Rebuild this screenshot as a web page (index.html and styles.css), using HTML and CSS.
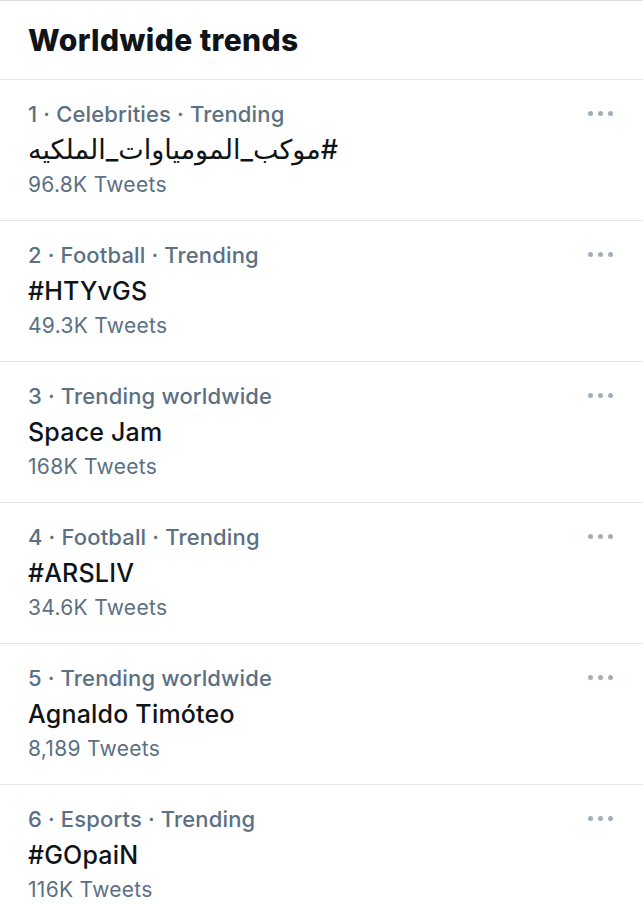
FILE: index.html
```html
<!DOCTYPE html>
<html>
<head>
<meta charset="utf-8">
<link rel="stylesheet" href="styles.css">
</head>
<body>
<div class="page">
  <header class="head"><h1 class="title">Worldwide trends</h1></header>
  <ul class="list">
    <li class="trend">
      <div class="body">
        <div class="meta">1 · Celebrities · Trending</div>
        <div class="name"><span class="rtl" dir="rtl">#موكب_المومياوات_الملكيه</span></div>
        <div class="count">96.8K Tweets</div>
      </div>
      <div class="more"><span></span><span></span><span></span></div>
    </li>
    <li class="trend">
      <div class="body">
        <div class="meta">2 · Football · Trending</div>
        <div class="name">#HTYvGS</div>
        <div class="count">49.3K Tweets</div>
      </div>
      <div class="more"><span></span><span></span><span></span></div>
    </li>
    <li class="trend">
      <div class="body">
        <div class="meta">3 · Trending worldwide</div>
        <div class="name">Space Jam</div>
        <div class="count">168K Tweets</div>
      </div>
      <div class="more"><span></span><span></span><span></span></div>
    </li>
    <li class="trend">
      <div class="body">
        <div class="meta">4 · Football · Trending</div>
        <div class="name">#ARSLIV</div>
        <div class="count">34.6K Tweets</div>
      </div>
      <div class="more"><span></span><span></span><span></span></div>
    </li>
    <li class="trend">
      <div class="body">
        <div class="meta">5 · Trending worldwide</div>
        <div class="name">Agnaldo Timóteo</div>
        <div class="count">8,189 Tweets</div>
      </div>
      <div class="more"><span></span><span></span><span></span></div>
    </li>
    <li class="trend">
      <div class="body">
        <div class="meta">6 · Esports · Trending</div>
        <div class="name">#GOpaiN</div>
        <div class="count">116K Tweets</div>
      </div>
      <div class="more"><span></span><span></span><span></span></div>
    </li>
  </ul>
</div>
</body>
</html>
```
FILE: styles.css
```css
* { box-sizing: border-box; }
html, body { margin: 0; padding: 0; background: #fff; }
body { font-family: Inter, "Noto Sans", "DejaVu Sans", sans-serif; color: #0f1419; }
.page { width: 643px; border-top: 1px solid #dcdfe2; }
.head { height: 79px; border-bottom: 1px solid #e3e6e8; padding: 0 28px; display: flex; align-items: center; }
.title { margin: 0; font-size: 30px; font-weight: 800; letter-spacing: 0.4px; color: #0f1419; }
.list { list-style: none; margin: 0; padding: 0; }
.trend { height: 141px; border-bottom: 1px solid #e3e6e8; display: flex; justify-content: space-between; padding: 21px 30px 0 28px; }
.meta { font-size: 22px; font-weight: 500; color: #5b7083; line-height: 26px; letter-spacing: 0.15px; }
.name { font-size: 25px; font-weight: 500; line-height: 34px; margin-top: 6px; color: #0f1419; letter-spacing: 0.2px; }
.rtl { font-size: 27px; letter-spacing: 0; }
.count { font-size: 21px; font-weight: 400; color: #5b7083; line-height: 30px; letter-spacing: 0.3px; margin-top: 3px; }
.more { display: flex; gap: 5px; padding-top: 10px; }
.more span { width: 5px; height: 5px; border-radius: 50%; background: #a3adb8; }
```
